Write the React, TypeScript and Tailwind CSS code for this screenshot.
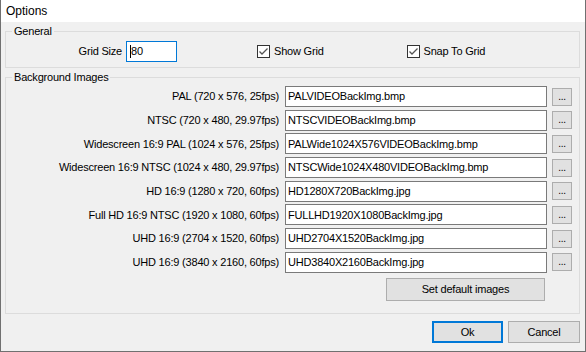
import React from "react";

const rows: [string, string][] = [
  ["PAL (720 x 576, 25fps)", "PALVIDEOBackImg.bmp"],
  ["NTSC (720 x 480, 29.97fps)", "NTSCVIDEOBackImg.bmp"],
  ["Widescreen 16:9 PAL (1024 x 576, 25fps)", "PALWide1024X576VIDEOBackImg.bmp"],
  ["Widescreen 16:9 NTSC (1024 x 480, 29.97fps)", "NTSCWide1024X480VIDEOBackImg.bmp"],
  ["HD 16:9 (1280 x 720, 60fps)", "HD1280X720BackImg.jpg"],
  ["Full HD 16:9 NTSC (1920 x 1080, 60fps)", "FULLHD1920X1080BackImg.jpg"],
  ["UHD 16:9 (2704 x 1520, 60fps)", "UHD2704X1520BackImg.jpg"],
  ["UHD 16:9 (3840 x 2160, 60fps)", "UHD3840X2160BackImg.jpg"],
];

function CheckBox({ label }: { label: string }) {
  return (
    <div className="flex items-center">
      <div className="w-[13px] h-[13px] border border-[#333] bg-white flex items-center justify-center">
        <svg width="11" height="11" viewBox="0 0 11 11">
          <path d="M1.5 5.5 L4 8 L9.5 2.5" fill="none" stroke="#555" strokeWidth="1.3" />
        </svg>
      </div>
      <span className="ml-[4px]">{label}</span>
    </div>
  );
}

export default function App() {
  return (
    <div
      className="w-[586px] h-[352px] flex flex-col bg-[#f0f0f0] border-x border-b border-[#707070] text-[11px] text-black tracking-[-0.2px]"
      style={{ fontFamily: '"Liberation Sans", Arial, sans-serif' }}
    >
      <div className="h-[22px] bg-white pl-[5px] flex items-center text-[12px] tracking-normal shrink-0">
        Options
      </div>
      <div className="pl-[4px] pr-[5px] flex flex-col">
        <fieldset className="border border-[#dcdcdc] mt-[3px] h-[43px]">
          <legend className="ml-[6px] px-[2px] leading-[13px]">General</legend>
          <div className="flex items-center mt-[3px]">
            <div className="w-[116px] text-right">Grid Size</div>
            <div className="ml-[4px] w-[51px] h-[21px] border border-[#0078d7] bg-white flex items-center pl-[3px]">
              <span className="w-px h-[13px] bg-black" />
              <span>80</span>
            </div>
            <div className="ml-[80px]">
              <CheckBox label="Show Grid" />
            </div>
            <div className="ml-[83px]">
              <CheckBox label="Snap To Grid" />
            </div>
          </div>
        </fieldset>
        <fieldset className="border border-[#dcdcdc] mt-[3px] h-[243px]">
          <legend className="ml-[6px] px-[2px] leading-[13px]">Background Images</legend>
          <div className="flex flex-col gap-[2.7px] mt-[2px]">
            {rows.map(([label, file]) => (
              <div key={label} className="flex items-center h-[21px]">
                <div className="w-[273px] text-right">{label}</div>
                <div className="ml-[6px] w-[262px] h-[21px] border border-[#7a7a7a] bg-white flex items-center pl-[2px]">
                  {file}
                </div>
                <div className="ml-[5px] w-[20px] h-[18px] border border-[#adadad] bg-[#e1e1e1] flex items-center justify-center text-[10px] leading-none">
                  ...
                </div>
              </div>
            ))}
          </div>
          <div className="ml-[380px] mt-[5px] w-[159px] h-[23px] border border-[#adadad] bg-[#e1e1e1] flex items-center justify-center">
            Set default images
          </div>
        </fieldset>
        <div className="flex justify-end gap-[5px] mt-[7px]">
          <div className="w-[71px] h-[22px] border-2 border-[#0078d7] bg-[#e1e1e1] flex items-center justify-center">
            Ok
          </div>
          <div className="w-[72px] h-[22px] border border-[#adadad] bg-[#e1e1e1] flex items-center justify-center">
            Cancel
          </div>
        </div>
      </div>
    </div>
  );
}
